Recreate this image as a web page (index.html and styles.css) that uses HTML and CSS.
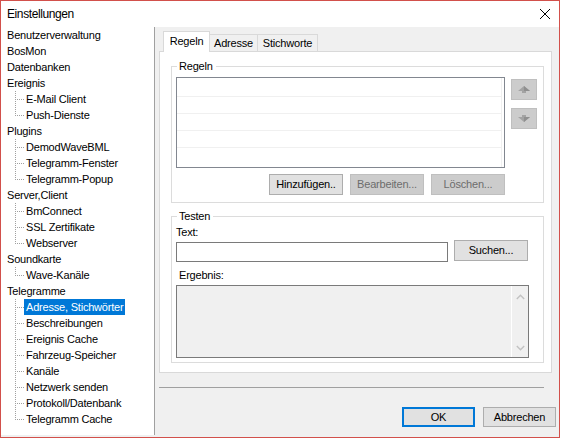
FILE: index.html
```html
<!DOCTYPE html>
<html lang="de">
<head>
<meta charset="utf-8">
<title>Einstellungen</title>
<link rel="stylesheet" href="styles.css">
</head>
<body>
<div class="window">
  <div class="titlebar">
    <span class="title">Einstellungen</span>
    <svg class="close" width="10" height="10" viewBox="0 0 10 10"><path d="M0,0 L10,10 M10,0 L0,10" stroke="#000" stroke-width="1" fill="none"/></svg>
  </div>
  <div class="content">
    <ul class="tree">
      <li><div class="row">Benutzerverwaltung</div></li>
      <li><div class="row">BosMon</div></li>
      <li><div class="row">Datenbanken</div></li>
      <li><div class="row">Ereignis</div>
        <ul class="children">
          <li class="row"><span class="label">E-Mail Client</span></li>
          <li class="row"><span class="label">Push-Dienste</span></li>
        </ul>
      </li>
      <li><div class="row">Plugins</div>
        <ul class="children">
          <li class="row"><span class="label">DemodWaveBML</span></li>
          <li class="row"><span class="label">Telegramm-Fenster</span></li>
          <li class="row"><span class="label">Telegramm-Popup</span></li>
        </ul>
      </li>
      <li><div class="row">Server,Client</div>
        <ul class="children">
          <li class="row"><span class="label">BmConnect</span></li>
          <li class="row"><span class="label">SSL Zertifikate</span></li>
          <li class="row"><span class="label">Webserver</span></li>
        </ul>
      </li>
      <li><div class="row">Soundkarte</div>
        <ul class="children">
          <li class="row"><span class="label">Wave-Kanäle</span></li>
        </ul>
      </li>
      <li><div class="row">Telegramme</div>
        <ul class="children">
          <li class="row selected"><span class="label">Adresse, Stichwörter</span></li>
          <li class="row"><span class="label">Beschreibungen</span></li>
          <li class="row"><span class="label">Ereignis Cache</span></li>
          <li class="row"><span class="label">Fahrzeug-Speicher</span></li>
          <li class="row"><span class="label">Kanäle</span></li>
          <li class="row"><span class="label">Netzwerk senden</span></li>
          <li class="row"><span class="label">Protokoll/Datenbank</span></li>
          <li class="row"><span class="label">Telegramm Cache</span></li>
        </ul>
      </li>
    </ul>
    <div class="main">
      <div class="tabcontrol">
        <div class="tabstrip">
          <div class="tab active tab-regeln">Regeln</div>
          <div class="tab tab-adresse">Adresse</div>
          <div class="tab tab-stich">Stichworte</div>
        </div>
        <div class="tabpanel">
          <fieldset class="group group-rules">
            <legend>Regeln</legend>
            <div class="rules-row">
              <div class="listview">
                <div class="lv-col">
                  <div class="lv-row"></div>
                  <div class="lv-row"></div>
                  <div class="lv-row"></div>
                  <div class="lv-row"></div>
                </div>
              </div>
              <div class="updown">
                <button class="btn arrow-btn" disabled>
                  <svg width="12" height="8" viewBox="0 0 12 8"><path d="M6,0 L12,5 L8,5 L8,7 L4,7 L4,5 L0,5 Z" fill="#a3a3a3"/><path d="M6,0 L12,5 L6,5 Z" fill="#8f8f8f"/></svg>
                </button>
                <button class="btn arrow-btn arrow-down" disabled>
                  <svg width="12" height="8" viewBox="0 0 12 8"><path d="M4,0 L8,0 L8,2 L12,2 L6,7 L0,2 L4,2 Z" fill="#a3a3a3"/><path d="M6,7 L12,2 L6,2 Z" fill="#8f8f8f"/></svg>
                </button>
              </div>
            </div>
            <div class="rule-buttons">
              <button class="btn">Hinzufügen..</button>
              <button class="btn" disabled>Bearbeiten...</button>
              <button class="btn" disabled>Löschen...</button>
            </div>
          </fieldset>
          <fieldset class="group group-test">
            <legend>Testen</legend>
            <div class="field-label">Text:</div>
            <div class="search-row">
              <div class="textbox"></div>
              <button class="btn search-btn">Suchen...</button>
            </div>
            <div class="field-label result-label">Ergebnis:</div>
            <div class="result">
              <div class="result-text"></div>
              <div class="scrollbar">
                <svg width="9" height="6" viewBox="0 0 9 6"><polyline points="0.8,5 4.5,1.3 8.2,5" fill="none" stroke="#c2c2c2" stroke-width="1.4"/></svg>
                <svg width="9" height="6" viewBox="0 0 9 6"><polyline points="0.8,1 4.5,4.7 8.2,1" fill="none" stroke="#c2c2c2" stroke-width="1.4"/></svg>
              </div>
            </div>
          </fieldset>
        </div>
      </div>
      <div class="separator"></div>
      <div class="dialog-buttons">
        <button class="btn dlg-btn ok">OK</button>
        <button class="btn dlg-btn">Abbrechen</button>
      </div>
    </div>
  </div>
</div>
</body>
</html>
```

FILE: styles.css
```css
html, body {
  margin: 0;
  padding: 0;
  background: #ffffff;
}

body {
  font-family: "Liberation Sans", Arial, sans-serif;
  font-size: 11px;
  letter-spacing: -0.2px;
  color: #000;
}

.window {
  width: 560px;
  height: 438px;
  box-sizing: border-box;
  border: 1px solid #d2504b;
  display: flex;
  flex-direction: column;
  background: #f0f0f0;
}

/* title bar */
.titlebar {
  height: 26px;
  flex: none;
  background: #fff;
  display: flex;
  align-items: center;
  padding: 0 9px 0 6px;
}

.title {
  flex: 1;
  font-size: 12px;
  letter-spacing: -0.4px;
}

.close {
  display: block;
  flex: none;
}

.content {
  flex: 1;
  display: flex;
  min-height: 0;
}

/* tree */
.tree {
  width: 154px;
  flex: none;
  box-sizing: border-box;
  border-right: 1px solid #a0a0a0;
  background: #fff;
  margin: 0 0 2px 0;
  padding: 0;
  list-style: none;
}

.tree ul {
  list-style: none;
  margin: 0;
  padding: 0;
}

.row {
  height: 16px;
  line-height: 16px;
  padding-left: 6px;
  white-space: nowrap;
}

.children .row {
  position: relative;
  padding-left: 23px;
}

.label {
  display: inline-block;
  padding: 0 2px;
  height: 16px;
}

.row.selected .label {
  background: #0078d7;
  color: #fff;
}

.children .row::before {
  content: "";
  position: absolute;
  left: 14px;
  top: 0;
  width: 1px;
  height: 16px;
  background: repeating-linear-gradient(to bottom, #a0a0a0 0 1px, transparent 1px 2px);
}

.children .row:last-child::before {
  height: 9px;
}

.children .row::after {
  content: "";
  position: absolute;
  left: 16px;
  top: 8px;
  width: 8px;
  height: 1px;
  background: repeating-linear-gradient(to right, #a0a0a0 0 1px, transparent 1px 2px);
}

/* main */
.main {
  flex: 1;
  display: flex;
  flex-direction: column;
  padding: 4px 3px 0 4px;
}

.tabcontrol {
  width: 393px;
}

.tabstrip {
  display: flex;
  align-items: flex-end;
  height: 20px;
  padding-left: 4px;
  position: relative;
  z-index: 1;
}

.tab {
  height: 17px;
  box-sizing: border-box;
  line-height: 16px;
  border: 1px solid #d9d9d9;
  border-bottom: 0;
  background: #f0f0f0;
  text-align: center;
  margin-left: -1px;
}

.tab.active {
  height: 21px;
  line-height: 19px;
  background: #fff;
  margin-bottom: -1px;
  margin-left: 0;
}

.tab-regeln { width: 47px; }
.tab-adresse { width: 49px; }
.tab-stich { width: 61px; }

.tabpanel {
  height: 322px;
  box-sizing: border-box;
  border: 1px solid #d9d9d9;
  background: #fff;
  padding: 0 7px 0 11px;
  overflow: hidden;
}

/* group boxes */
.group {
  margin: 0;
  min-width: 0;
  border: 1px solid #dcdcdc;
  padding: 4px 5px 7px 4px;
}

.group legend {
  padding: 0 3px 0 2px;
  margin-left: 1px;
  line-height: 13px;
}

.group-rules {
  margin-top: 8px;
}

.group-test {
  margin-top: 7px;
  padding: 3px 5px 4px 4px;
}

.rules-row {
  display: flex;
  align-items: flex-start;
}

.listview {
  width: 329px;
  height: 91px;
  box-sizing: border-box;
  border: 1px solid #828790;
  background: #fff;
  flex: none;
}

.lv-col {
  width: 325px;
  height: 100%;
  box-sizing: border-box;
  border-right: 1px solid #f0f0f0;
  padding-top: 2px;
}

.lv-row {
  height: 17px;
  box-sizing: border-box;
  border-bottom: 1px solid #f0f0f0;
}

.updown {
  display: flex;
  flex-direction: column;
  gap: 8px;
  margin: 2px 0 0 6px;
}

/* buttons */
.btn {
  box-sizing: border-box;
  margin: 0;
  padding: 0;
  height: 21px;
  width: 74px;
  background: #e1e1e1;
  border: 1px solid #adadad;
  font: inherit;
  letter-spacing: inherit;
  color: #000;
  line-height: 19px;
  text-align: center;
}

.btn:disabled {
  background: #cccccc;
  border-color: #bfbfbf;
  color: #6d6d6d;
}

.arrow-btn {
  width: 26px;
  display: flex;
  align-items: center;
  justify-content: center;
}

.arrow-btn svg {
  display: block;
}

.rule-buttons {
  width: 329px;
  display: flex;
  justify-content: flex-end;
  gap: 7px;
  margin-top: 6px;
}

.field-label {
  line-height: 13px;
  height: 13px;
}

.search-row {
  display: flex;
  align-items: flex-start;
  margin-top: 1px;
}

.textbox {
  width: 272px;
  height: 20px;
  box-sizing: border-box;
  border: 1px solid #7a7a7a;
  background: #fff;
  margin-top: 2px;
}

.search-btn {
  margin-left: 6px;
}

.result-label {
  padding-left: 3px;
  margin-top: 7px;
}

.result {
  margin-top: 3px;
  width: 353px;
  height: 73px;
  box-sizing: border-box;
  border: 1px solid #7a7a7a;
  background: #f0f0f0;
  display: flex;
}

.result-text {
  flex: 1;
}

.scrollbar {
  width: 17px;
  box-sizing: border-box;
  border-left: 1px solid #fff;
  display: flex;
  flex-direction: column;
  align-items: center;
  justify-content: space-between;
  padding: 8px 0 6px 1px;
}

.scrollbar svg {
  display: block;
}

/* bottom */
.separator {
  width: 385px;
  height: 1px;
  background: #a0a0a0;
  margin-top: 14px;
}

.dialog-buttons {
  display: flex;
  justify-content: flex-end;
  gap: 8px;
  margin-top: 19px;
}

.dlg-btn {
  width: 73px;
  height: 20px;
  line-height: 18px;
}

.ok {
  border: 2px solid #0078d7;
  line-height: 16px;
}
```
